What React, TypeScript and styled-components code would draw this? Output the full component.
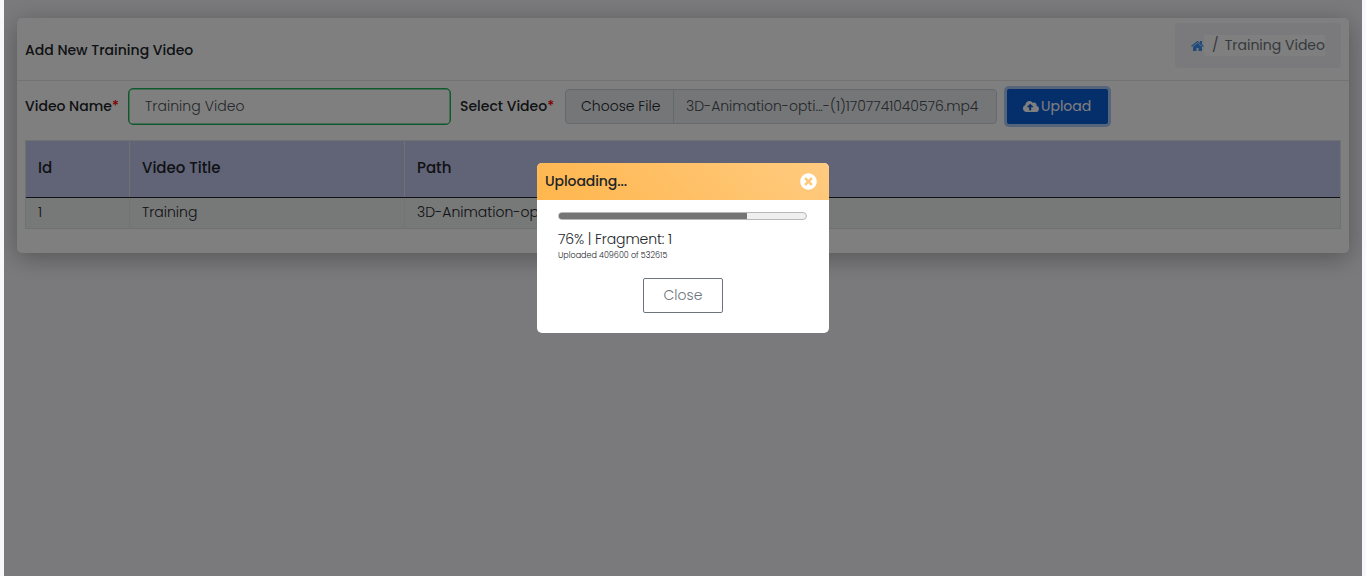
import React from "react";
import styled, { createGlobalStyle } from "styled-components";
import { FaCloudUploadAlt, FaTimesCircle } from "react-icons/fa";

const GlobalStyle = createGlobalStyle`
  * { box-sizing: border-box; }
  html, body { margin: 0; height: 100%; overflow: hidden; }
  body {
    background: #f8f8fa;
    color: #212529;
    font-family: Poppins, Inter, "Open Sans", sans-serif;
    font-size: 14px;
    font-weight: 300;
    line-height: 21px;
  }
  button { font: inherit; margin: 0; cursor: pointer; }
`;

const Text = styled.span<{ $ls?: number; $size?: number; $weight?: number }>`
  white-space: nowrap;
  letter-spacing: ${(p) => p.$ls ?? 0}px;
  font-size: ${(p) => p.$size ?? 14}px;
  font-weight: ${(p) => p.$weight ?? 300};
`;

const Page = styled.main`
  position: relative;
  height: 576px;
  margin: 0 4px;
  padding: 18px 13px 0;
  overflow: hidden;
  background: #f5f5f9;
`;

const Card = styled.section`
  height: 235px;
  border-radius: 5px;
  background: #fff;
  box-shadow: 0 5px 25px rgba(0, 0, 0, 0.3);
`;

const CardHeader = styled.header`
  display: flex;
  align-items: flex-start;
  justify-content: space-between;
  height: 63px;
  padding: 5px 8px 0;
  border-bottom: 1px solid #e6e6e6;
`;

const Title = styled.h1`
  margin: 0;
  padding-top: 17px;
  font-size: 14px;
  line-height: 21px;
`;

const Breadcrumb = styled.nav`
  display: flex;
  align-items: center;
  width: 166px;
  height: 45px;
  padding-left: 16px;
  border-radius: 4px;
  background: #f5f5f9;
  color: #6c757d;
`;

const HomeIcon = styled.svg`
  width: 13px;
  height: 14px;
  fill: #4094f7;
`;

const Crumb = styled.span`
  display: flex;
  width: 121px;
  height: 21px;
  padding-left: 8px;
  background: #fff;
`;

const Slash = styled.span`
  width: 13px;
  font-weight: 400;
`;

const Form = styled.form`
  display: flex;
  align-items: center;
  height: 50px;
  padding: 0 8px;
`;

const Label = styled.label<{ $width: number }>`
  width: ${(p) => p.$width}px;
  white-space: nowrap;
`;

const Star = styled(Text)`
  color: #f00;
`;

const NameField = styled.div`
  display: flex;
  align-items: center;
  width: 323px;
  height: 37px;
  margin-right: 9px;
  padding-left: 16px;
  border: 1px solid #1fb458;
  border-radius: 5px;
  box-shadow: inset 0 0 0 0.5px #1fb458;
  color: #495057;
`;

const FileField = styled.div`
  display: flex;
  align-items: center;
  width: 432px;
  height: 35px;
  margin-right: 10px;
  border: 1px solid #ced4da;
  border-radius: 4px;
  background: #e9ecef;
  color: #495057;
`;

const Choose = styled.span`
  display: flex;
  align-items: center;
  width: 108px;
  height: 100%;
  margin-right: 12px;
  padding-left: 15px;
  border-right: 1px solid #ced4da;
  color: #212529;
`;

const UploadButton = styled.button`
  display: flex;
  align-items: center;
  width: 101px;
  height: 35px;
  padding: 0 0 0 16px;
  border: 0;
  border-radius: 2px;
  background: #0b5ed7;
  box-shadow: 0 0 0 3px #a9cbf7;
  color: #fff;
`;

const CloudIcon = styled(FaCloudUploadAlt)`
  width: 16px;
  height: 13px;
  margin-right: 2px;
`;

const Table = styled.div`
  margin: 9px 8px 0;
  border: 1px solid #dee2e6;
`;

const Row = styled.div<{ $head?: boolean }>`
  display: grid;
  grid-template-columns: 104px 275px 1fr;
  height: ${(p) => (p.$head ? 57 : 30)}px;
  border-bottom: ${(p) => (p.$head ? "1px solid #212529" : "0")};
  background: ${(p) => (p.$head ? "#c3c7ef" : "#eff0f1")};
`;

const Cell = styled.div<{ $head?: boolean }>`
  display: flex;
  align-items: center;
  padding: 0 0 ${(p) => (p.$head ? 3 : 2)}px 12px;
  border-right: 1px solid ${(p) => (p.$head ? "#dee2e6" : "#e4e6e8")};
  &:last-child { border-right: 0; }
`;

const Backdrop = styled.div`
  position: absolute;
  inset: 0;
  background: rgba(0, 0, 0, 0.5);
`;

const Modal = styled.div`
  position: absolute;
  top: 163px;
  left: 533px;
  width: 292px;
  height: 170px;
  overflow: hidden;
  border-radius: 5px;
  background: #fff;
`;

const ModalHeader = styled.div`
  display: flex;
  align-items: center;
  justify-content: space-between;
  height: 37px;
  padding: 0 12px 0 8px;
  background: linear-gradient(45deg, #ffb64d, #ffcb80);
`;

const CloseIcon = styled(FaTimesCircle)`
  width: 17px;
  height: 17px;
  color: #fff;
`;

const ModalBody = styled.div`
  display: flex;
  flex-direction: column;
  padding: 12px 21px 0;
`;

const Track = styled.div`
  width: 249px;
  height: 8px;
  margin-bottom: 9px;
  overflow: hidden;
  border: 1px solid #b8b8b8;
  border-radius: 4px;
  background: #efefef;
`;

const Fill = styled.div`
  height: 100%;
  background: #757575;
  box-shadow: 0 0 0 1px #757575;
`;

const Detail = styled(Text)`
  padding-top: 1px;
  line-height: 10px;
`;

const CloseButton = styled.button`
  align-self: center;
  width: 80px;
  height: 35px;
  margin-top: 17px;
  padding: 0;
  border: 1px solid #6c757d;
  border-radius: 2px;
  background: #fff;
  color: #6c757d;
`;

const progress = 409600 / 532615;

export default function App() {
  return (
    <>
      <GlobalStyle />
      <Page>
        <Card>
          <CardHeader>
            <Title><Text $weight={500}>Add New Training Video</Text></Title>
            <Breadcrumb>
              <HomeIcon viewBox="0 0 1664 1792">
                <path d="M1408 992v480q0 26-19 45t-45 19h-384v-384h-256v384h-384q-26 0-45-19t-19-45v-480q0-1 .5-3t.5-3l575-474 575 474q1 2 1 6zm223-69l-62 74q-8 9-21 11h-3q-13 0-21-7l-692-577-692 577q-12 8-24 7-13-2-21-11l-62-74q-8-10-7-23.5t11-21.5l719-599q32-26 76-26t76 26l244 204v-195q0-14 9-23t23-9h192q14 0 23 9t9 23v408l219 182q10 8 11 21.5t-7 23.5z" />
              </HomeIcon>
              <Crumb>
                <Slash>/</Slash>
                <Text $weight={400}>Training Video</Text>
              </Crumb>
            </Breadcrumb>
          </CardHeader>
          <Form>
            <Label $width={103}><Text $weight={500}>Video Name</Text><Star $weight={500}>*</Star></Label>
            <NameField><Text $ls={0.05}>Training Video</Text></NameField>
            <Label $width={105}><Text $weight={500}>Select Video</Text><Star $weight={500}>*</Star></Label>
            <FileField>
              <Choose><Text>Choose File</Text></Choose>
              <Text $ls={-0.05}>3D-Animation-opti...-(1)1707741040576.mp4</Text>
            </FileField>
            <UploadButton type="button"><CloudIcon /><Text $weight={400}>Upload</Text></UploadButton>
          </Form>
          <Table>
            <Row $head>
              <Cell $head><Text $weight={500} $size={15}>Id</Text></Cell>
              <Cell $head><Text $weight={500} $size={15}>Video Title</Text></Cell>
              <Cell $head><Text $weight={500} $size={15}>Path</Text></Cell>
            </Row>
            <Row>
              <Cell><Text>1</Text></Cell>
              <Cell><Text>Training</Text></Cell>
              <Cell><Text>3D-Animation-opti...-(1)1707741040576.mp4</Text></Cell>
            </Row>
          </Table>
        </Card>
        <Backdrop />
        <Modal>
          <ModalHeader>
            <Text $weight={500} $ls={-0.1}>Uploading...</Text>
            <CloseIcon />
          </ModalHeader>
          <ModalBody>
            <Track><Fill style={{ width: `${Math.floor(progress * 100) - 0.4}%` }} /></Track>
            <Text $ls={-0.12}>76% | Fragment: 1</Text>
            <Detail $size={8}>Uploaded 409600 of 532615</Detail>
            <CloseButton type="button"><Text>Close</Text></CloseButton>
          </ModalBody>
        </Modal>
      </Page>
    </>
  );
}
